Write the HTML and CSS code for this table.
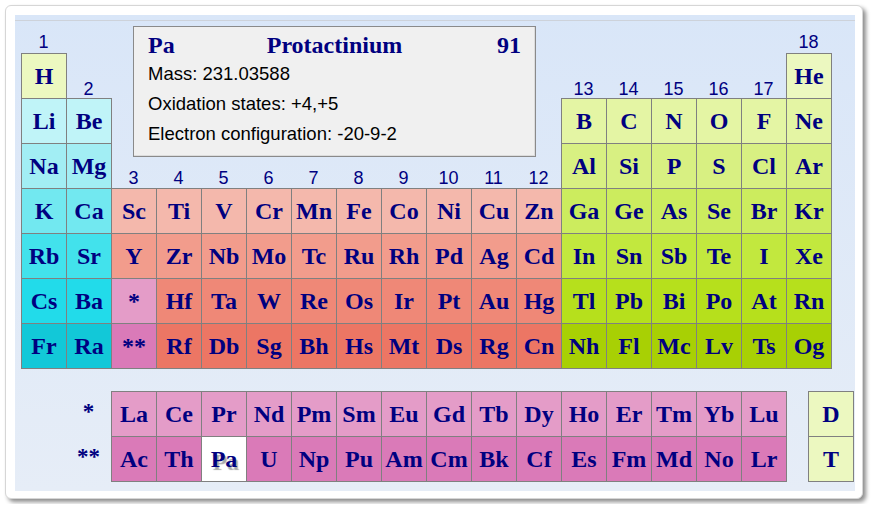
FILE: index.html
```html
<!DOCTYPE html>
<html>
<head>
<meta charset="utf-8">
<link rel="stylesheet" href="styles.css">
</head>
<body>
<div class="card">
  <div class="panel">
    <div class="inner">
      <div class="table">
        <div class="info">
          <div class="info-title"><span class="sym">Pa</span><span class="name">Protactinium</span><span class="num">91</span></div>
          <div class="info-line">Mass: 231.03588</div>
          <div class="info-line">Oxidation states: +4,+5</div>
          <div class="info-line">Electron configuration: -20-9-2</div>
        </div>
        <!-- row 0 -->
        <div class="glabel top">1</div>
        <div class="glabel top c18">18</div>
        <!-- row 1 -->
        <div class="cell h">H</div>
        <div class="glabel">2</div>
        <div class="glabel c13">13</div>
        <div class="glabel">14</div>
        <div class="glabel">15</div>
        <div class="glabel">16</div>
        <div class="glabel">17</div>
        <div class="cell h">He</div>
        <!-- row 2 -->
        <div class="cell s2">Li</div><div class="cell s2">Be</div>
        <div class="cell p2 c13">B</div><div class="cell p2">C</div><div class="cell p2">N</div><div class="cell p2">O</div><div class="cell p2">F</div><div class="cell p2">Ne</div>
        <!-- row 3 -->
        <div class="cell s3">Na</div><div class="cell s3">Mg</div>
        <div class="glabel low">3</div><div class="glabel low">4</div><div class="glabel low">5</div><div class="glabel low">6</div><div class="glabel low">7</div><div class="glabel low">8</div><div class="glabel low">9</div><div class="glabel low">10</div><div class="glabel low">11</div><div class="glabel low">12</div>
        <div class="cell p3">Al</div><div class="cell p3">Si</div><div class="cell p3">P</div><div class="cell p3">S</div><div class="cell p3">Cl</div><div class="cell p3">Ar</div>
        <!-- row 4 -->
        <div class="cell s4">K</div><div class="cell s4">Ca</div>
        <div class="cell d4">Sc</div><div class="cell d4">Ti</div><div class="cell d4">V</div><div class="cell d4">Cr</div><div class="cell d4">Mn</div><div class="cell d4">Fe</div><div class="cell d4">Co</div><div class="cell d4">Ni</div><div class="cell d4">Cu</div><div class="cell d4">Zn</div>
        <div class="cell p4">Ga</div><div class="cell p4">Ge</div><div class="cell p4">As</div><div class="cell p4">Se</div><div class="cell p4">Br</div><div class="cell p4">Kr</div>
        <!-- row 5 -->
        <div class="cell s5">Rb</div><div class="cell s5">Sr</div>
        <div class="cell d5">Y</div><div class="cell d5">Zr</div><div class="cell d5">Nb</div><div class="cell d5">Mo</div><div class="cell d5">Tc</div><div class="cell d5">Ru</div><div class="cell d5">Rh</div><div class="cell d5">Pd</div><div class="cell d5">Ag</div><div class="cell d5">Cd</div>
        <div class="cell p5">In</div><div class="cell p5">Sn</div><div class="cell p5">Sb</div><div class="cell p5">Te</div><div class="cell p5">I</div><div class="cell p5">Xe</div>
        <!-- row 6 -->
        <div class="cell s6">Cs</div><div class="cell s6">Ba</div>
        <div class="cell f6">*</div><div class="cell d6">Hf</div><div class="cell d6">Ta</div><div class="cell d6">W</div><div class="cell d6">Re</div><div class="cell d6">Os</div><div class="cell d6">Ir</div><div class="cell d6">Pt</div><div class="cell d6">Au</div><div class="cell d6">Hg</div>
        <div class="cell p6">Tl</div><div class="cell p6">Pb</div><div class="cell p6">Bi</div><div class="cell p6">Po</div><div class="cell p6">At</div><div class="cell p6">Rn</div>
        <!-- row 7 -->
        <div class="cell s7">Fr</div><div class="cell s7">Ra</div>
        <div class="cell f7">**</div><div class="cell d7">Rf</div><div class="cell d7">Db</div><div class="cell d7">Sg</div><div class="cell d7">Bh</div><div class="cell d7">Hs</div><div class="cell d7">Mt</div><div class="cell d7">Ds</div><div class="cell d7">Rg</div><div class="cell d7">Cn</div>
        <div class="cell p7">Nh</div><div class="cell p7">Fl</div><div class="cell p7">Mc</div><div class="cell p7">Lv</div><div class="cell p7">Ts</div><div class="cell p7">Og</div>
      </div>

      <div class="series">
        <div class="slabel">*</div>
        <div class="cell f6">La</div><div class="cell f6">Ce</div><div class="cell f6">Pr</div><div class="cell f6">Nd</div><div class="cell f6">Pm</div><div class="cell f6">Sm</div><div class="cell f6">Eu</div><div class="cell f6">Gd</div><div class="cell f6">Tb</div><div class="cell f6">Dy</div><div class="cell f6">Ho</div><div class="cell f6">Er</div><div class="cell f6">Tm</div><div class="cell f6">Yb</div><div class="cell f6">Lu</div>
        <div class="cell h iso">D</div>
        <div class="slabel">**</div>
        <div class="cell f7">Ac</div><div class="cell f7">Th</div><div class="cell sel">Pa</div><div class="cell f7">U</div><div class="cell f7">Np</div><div class="cell f7">Pu</div><div class="cell f7">Am</div><div class="cell f7">Cm</div><div class="cell f7">Bk</div><div class="cell f7">Cf</div><div class="cell f7">Es</div><div class="cell f7">Fm</div><div class="cell f7">Md</div><div class="cell f7">No</div><div class="cell f7">Lr</div>
        <div class="cell h iso">T</div>
      </div>
    </div>
  </div>
</div>
</body>
</html>
```

FILE: styles.css
```css
html, body {
  margin: 0;
  padding: 0;
  background: #ffffff;
}

body {
  padding: 5px;
}

.card {
  width: 840px;
  height: 476px;
  padding: 9px 7px 7px 9px;
  background: #ffffff;
  border: 1px solid #d6d6d6;
  border-radius: 6px;
  box-shadow: 3px 3px 4px rgba(0, 0, 0, 0.45);
  box-sizing: content-box;
}

.panel {
  width: 840px;
  height: 476px;
  padding-top: 5px;
  box-sizing: border-box;
  background: linear-gradient(#d9e6f8, #e6edf7);
}

.inner {
  border-top: 1px solid #cdd2da;
  padding: 5px 0 0 6px;
}

.table {
  display: grid;
  grid-template-columns: repeat(18, 45px);
  grid-template-rows: 27px repeat(7, 45px);
}

.series {
  margin-top: 23px;
  display: grid;
  grid-template-columns: repeat(17, 45px) 22px 45px;
  grid-template-rows: 45px 45px;
}

.cell {
  width: 46px;
  height: 46px;
  box-sizing: border-box;
  border: 1px solid #808080;
  display: flex;
  align-items: center;
  justify-content: center;
  font-family: "Liberation Serif", "Times New Roman", serif;
  font-weight: bold;
  font-size: 24px;
  color: #000080;
}

.glabel {
  align-self: end;
  text-align: center;
  font-family: "Liberation Sans", Arial, sans-serif;
  font-size: 18px;
  line-height: 18px;
  color: #000080;
}

.glabel.top { padding-bottom: 2px; }
.glabel.low { padding-bottom: 1px; }

.c13 { grid-column: 13; }
.c18 { grid-column: 18; }

.slabel {
  grid-column: 2;
  display: flex;
  align-items: center;
  justify-content: center;
  padding-bottom: 3px;
  font-family: "Liberation Serif", "Times New Roman", serif;
  font-weight: bold;
  font-size: 23px;
  color: #000080;
}

.iso { grid-column: 19; }

/* colours */
.h { background: #ecf8c0; }
.s2 { background: #c0f4f8; }
.s3 { background: #a2eef4; }
.s4 { background: #72e8f0; }
.s5 { background: #42e2ec; }
.s6 { background: #22dbea; }
.s7 { background: #12c8d8; }

.d4 { background: #f4b8ac; }
.d5 { background: #f29c8c; }
.d6 { background: #ef8877; }
.d7 { background: #ec7664; }

.f6 { background: #e49cc8; }
.f7 { background: #da7ab8; }

.p2 { background: #e4f5a4; }
.p3 { background: #d8f082; }
.p4 { background: #ccec5e; }
.p5 { background: #c2e83e; }
.p6 { background: #b6e01c; }
.p7 { background: #a8d004; }

.sel {
  background: #ffffff;
  text-shadow: 2px 3px 1px #a8a8a8;
}

/* info box */
.info {
  grid-column: 3 / 13;
  grid-row: 1 / 4;
  align-self: start;
  margin: 0 25px 0 22px;
  height: 131px;
  box-sizing: border-box;
  background: #f0f0f0;
  border: 1px solid #8a8a8a;
  box-shadow: inset -1px -1px 0 #dcdcdc;
  padding: 4px 14px 0 14px;
  position: relative;
  z-index: 1;
}

.info-title {
  display: grid;
  grid-template-columns: 1fr auto 1fr;
  font-family: "Liberation Serif", "Times New Roman", serif;
  font-weight: bold;
  font-size: 24px;
  line-height: 28px;
  color: #000080;
}

.info-title .num { text-align: right; }

.info-line {
  font-family: "Liberation Sans", Arial, sans-serif;
  font-size: 18.5px;
  line-height: 30px;
  color: #000000;
}
```
